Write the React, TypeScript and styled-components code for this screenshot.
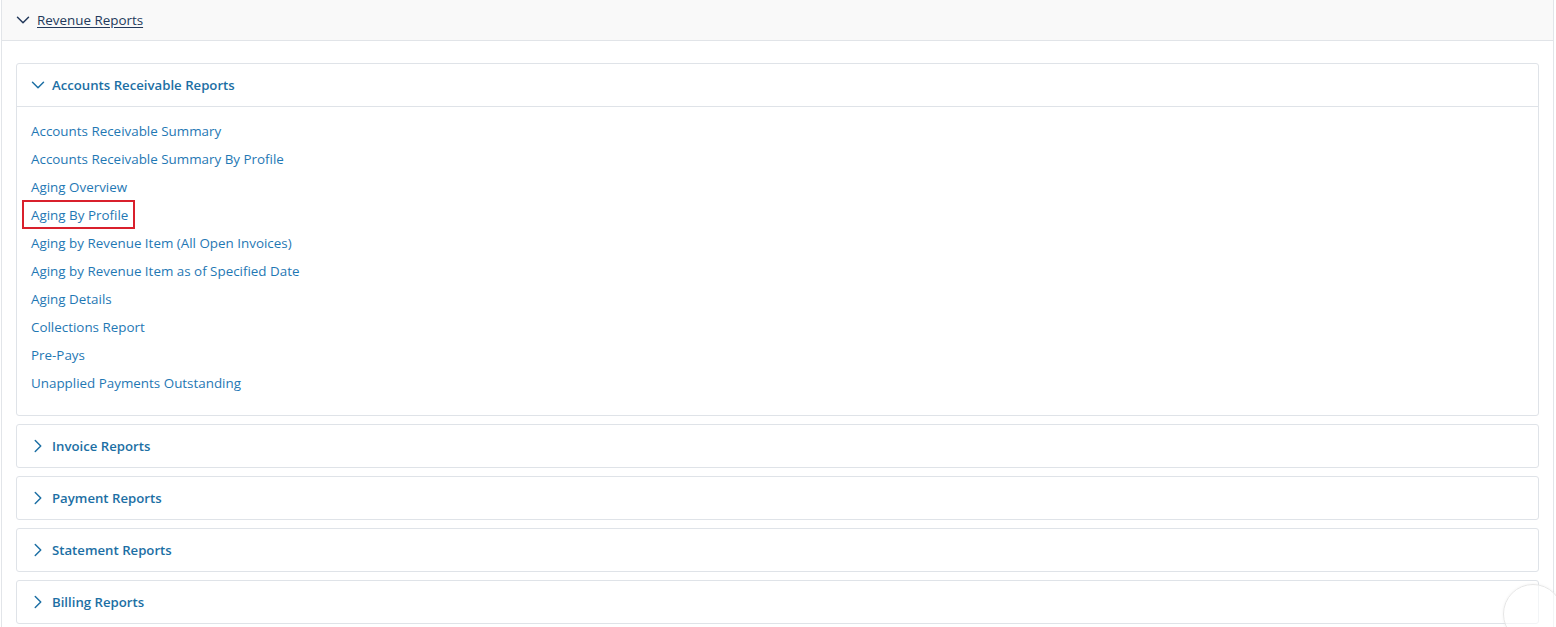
import React from "react";
import styled, { createGlobalStyle } from "styled-components";
import { ChevronDown, ChevronRight } from "lucide-react";

const GlobalStyle = createGlobalStyle`
  html, body {
    margin: 0;
    padding: 0;
    background: #ffffff;
    font-family: "Open Sans", "Noto Sans", Arial, sans-serif;
  }
`;

const Panel = styled.div`
  margin: 0 2px 0 1px;
  border-left: 1px solid #e2e5e9;
  border-right: 1px solid #e2e5e9;
  min-height: 627px;
  box-sizing: border-box;
`;

const PanelHeader = styled.div`
  height: 40px;
  display: flex;
  align-items: center;
  gap: 3px;
  padding-left: 10px;
  background: #f9f9f9;
  border-bottom: 1px solid #e1e4e8;
  color: #23395b;
`;

const PanelTitle = styled.a`
  font-size: 13.4px;
  color: #23395b;
  text-decoration: underline;
  text-underline-offset: 2px;
  cursor: pointer;
`;

const PanelBody = styled.div`
  display: flex;
  flex-direction: column;
  gap: 8px;
  padding: 22px 14px 0 14px;
`;

const Card = styled.div`
  border: 1px solid #dfe3e8;
  border-radius: 3px;
  background: #ffffff;
`;

const CardHeader = styled.div<{ $open?: boolean }>`
  height: 42px;
  display: flex;
  align-items: center;
  gap: 3px;
  padding-left: 10px;
  color: #1c6fa4;
  border-bottom: ${(p) => (p.$open ? "1px solid #dfe3e8" : "none")};
`;

const CardTitle = styled.span`
  font-size: 13.2px;
  font-weight: 600;
  color: #1c6fa4;
`;

const LinkList = styled.ul`
  list-style: none;
  margin: 0;
  padding: 10px 14px 18px 14px;
`;

const LinkItem = styled.li`
  height: 28px;
  display: flex;
  align-items: center;
`;

const ReportLink = styled.a<{ $marked?: boolean }>`
  position: relative;
  font-size: 13.4px;
  color: #1f78b4;
  text-decoration: none;
  cursor: pointer;

  ${(p) =>
    p.$marked &&
    `
    &::after {
      content: "";
      position: absolute;
      left: -9px;
      right: -7px;
      top: -6px;
      bottom: -5px;
      border: 2px solid #d9202c;
    }
  `}
`;

const FloatButton = styled.div`
  position: fixed;
  top: 584px;
  right: -7px;
  width: 58px;
  height: 58px;
  border-radius: 50%;
  background: rgba(255, 255, 255, 0.6);
  border: 1px solid #e6e6e6;
  box-shadow: 0 0 3px rgba(0, 0, 0, 0.06);
`;

const receivableLinks = [
  "Accounts Receivable Summary",
  "Accounts Receivable Summary By Profile",
  "Aging Overview",
  "Aging By Profile",
  "Aging by Revenue Item (All Open Invoices)",
  "Aging by Revenue Item as of Specified Date",
  "Aging Details",
  "Collections Report",
  "Pre-Pays",
  "Unapplied Payments Outstanding",
];

const collapsed = [
  "Invoice Reports",
  "Payment Reports",
  "Statement Reports",
  "Billing Reports",
];

const App: React.FC = () => {
  return (
    <>
      <GlobalStyle />
      <Panel>
        <PanelHeader>
          <ChevronDown size={22} strokeWidth={1.6} />
          <PanelTitle>Revenue Reports</PanelTitle>
        </PanelHeader>
        <PanelBody>
          <Card>
            <CardHeader $open>
              <ChevronDown size={22} strokeWidth={1.6} />
              <CardTitle>Accounts Receivable Reports</CardTitle>
            </CardHeader>
            <LinkList>
              {receivableLinks.map((l) => (
                <LinkItem key={l}>
                  <ReportLink $marked={l === "Aging By Profile"}>{l}</ReportLink>
                </LinkItem>
              ))}
            </LinkList>
          </Card>
          {collapsed.map((c) => (
            <Card key={c}>
              <CardHeader>
                <ChevronRight size={22} strokeWidth={1.6} />
                <CardTitle>{c}</CardTitle>
              </CardHeader>
            </Card>
          ))}
        </PanelBody>
      </Panel>
      <FloatButton />
    </>
  );
};

export default App;
